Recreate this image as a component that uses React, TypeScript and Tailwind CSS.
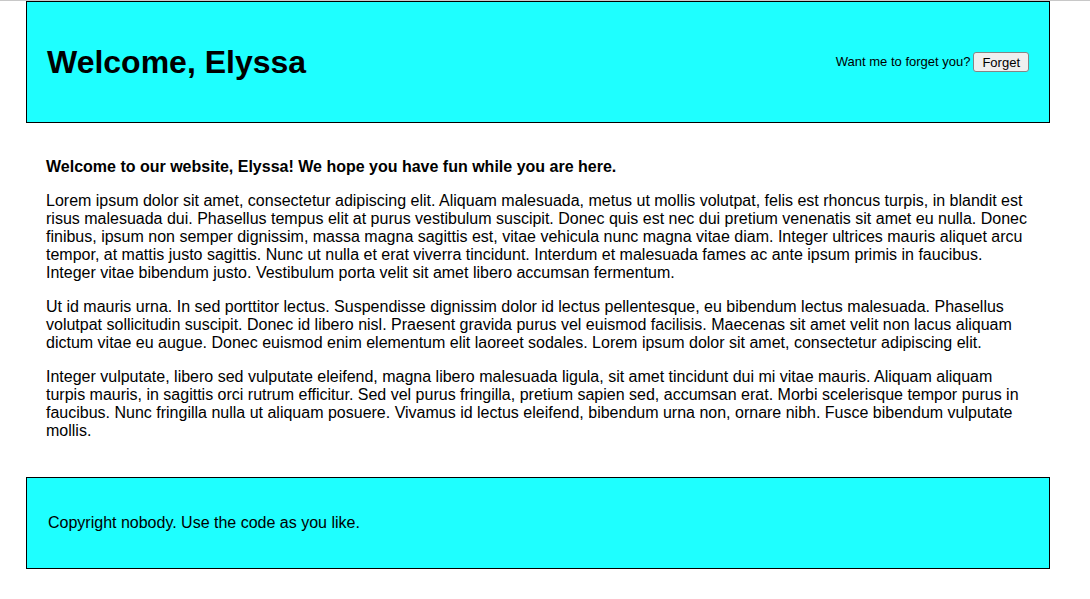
export default function App() {
  const paragraphs = [
    'Lorem ipsum dolor sit amet, consectetur adipiscing elit. Aliquam malesuada, metus ut mollis volutpat, felis est rhoncus turpis, in blandit est risus malesuada dui. Phasellus tempus elit at purus vestibulum suscipit. Donec quis est nec dui pretium venenatis sit amet eu nulla. Donec finibus, ipsum non semper dignissim, massa magna sagittis est, vitae vehicula nunc magna vitae diam. Integer ultrices mauris aliquet arcu tempor, at mattis justo sagittis. Nunc ut nulla et erat viverra tincidunt. Interdum et malesuada fames ac ante ipsum primis in faucibus. Integer vitae bibendum justo. Vestibulum porta velit sit amet libero accumsan fermentum.',
    'Ut id mauris urna. In sed porttitor lectus. Suspendisse dignissim dolor id lectus pellentesque, eu bibendum lectus malesuada. Phasellus volutpat sollicitudin suscipit. Donec id libero nisl. Praesent gravida purus vel euismod facilisis. Maecenas sit amet velit non lacus aliquam dictum vitae eu augue. Donec euismod enim elementum elit laoreet sodales. Lorem ipsum dolor sit amet, consectetur adipiscing elit.',
    'Integer vulputate, libero sed vulputate eleifend, magna libero malesuada ligula, sit amet tincidunt dui mi vitae mauris. Aliquam aliquam turpis mauris, in sagittis orci rutrum efficitur. Sed vel purus fringilla, pretium sapien sed, accumsan erat. Morbi scelerisque tempor purus in faucibus. Nunc fringilla nulla ut aliquam posuere. Vivamus id lectus eleifend, bibendum urna non, ornare nibh. Fusce bibendum vulputate mollis.',
  ];

  return (
    <div className="min-h-[599px] bg-white font-['Liberation_Sans',Arial,sans-serif] leading-[18px] text-black">
      <div className="h-px bg-[#c8c8c8]" />

      <header className="ml-[26px] flex h-[122px] w-[1024px] items-center justify-between border border-black bg-[#1effff] pl-[20px] pr-[20px]">
        <h1 className="text-[32px] font-bold leading-none">Welcome, Elyssa</h1>
        <div className="flex items-center gap-[3px] text-[13px]">
          <span>Want me to forget you?</span>
          <button
            type="button"
            className="h-[20px] rounded-[3px] border border-[#858585] bg-[#efefef] px-[8px] text-[13px] leading-none text-black"
          >
            Forget
          </button>
        </div>
      </header>

      <main className="ml-[26px] mt-[35px] w-[1024px] px-[20px] text-[16px]">
        <p className="font-bold">Welcome to our website, Elyssa! We hope you have fun while you are here.</p>
        {paragraphs.map((text) => (
          <p key={text.slice(0, 12)} className="mt-[16px]">
            {text}
          </p>
        ))}
      </main>

      <footer className="ml-[26px] mt-[37px] flex h-[92px] w-[1024px] items-center border border-black bg-[#1effff] px-[21px] text-[16px]">
        <p>Copyright nobody. Use the code as you like.</p>
      </footer>
    </div>
  );
}
